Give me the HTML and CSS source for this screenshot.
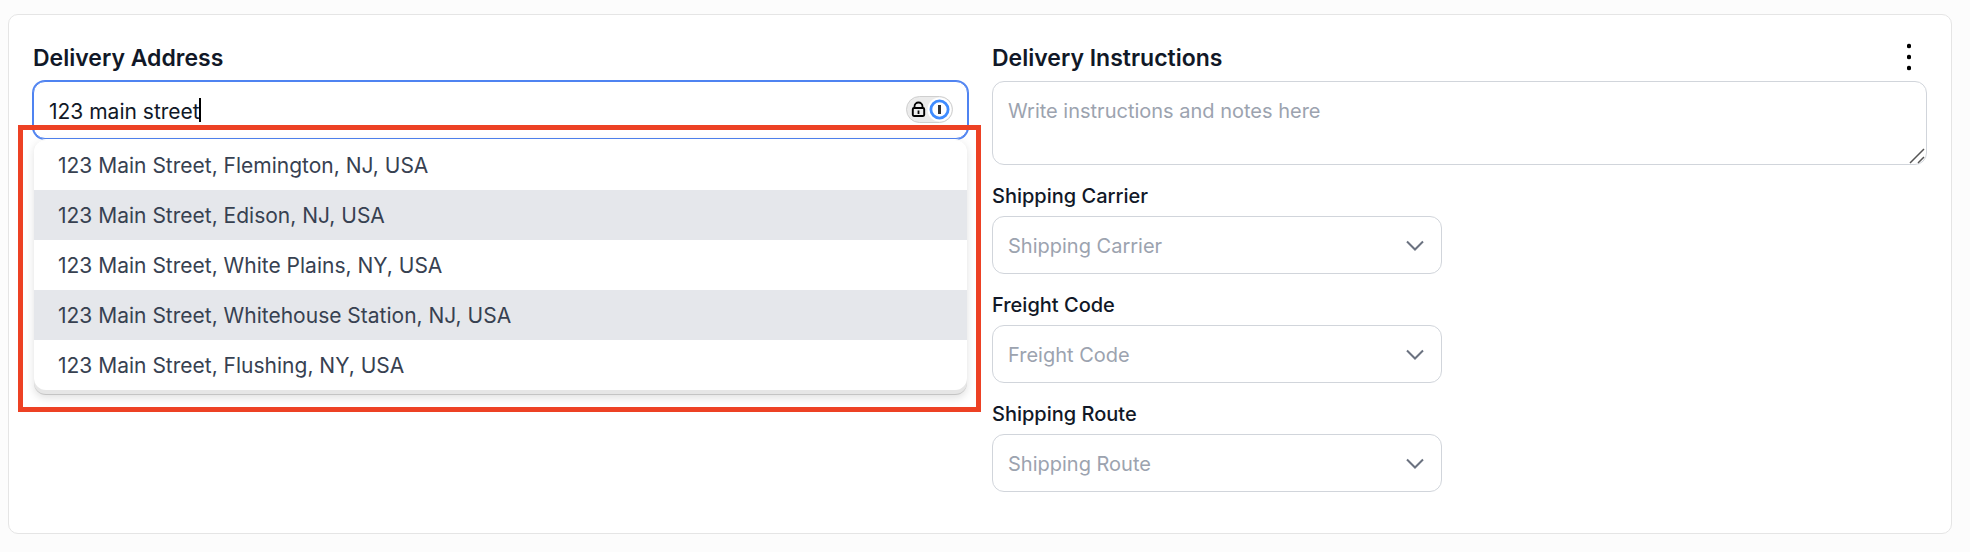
FILE: index.html
```html
<!DOCTYPE html>
<html lang="en">
<head>
  <meta charset="UTF-8" />
  <meta name="viewport" content="width=device-width, initial-scale=1.0"/>
  <title>Delivery</title>
  <link rel="stylesheet" href="styles.css">
</head>
<body>

  <div class="card">
    <!-- Address -->
    <div class="column">
      <div class="heading">
        <label class="title" for="address">Delivery Address</label>
      </div>
      <div class="address">
        <input type="text" id="address" class="address-input" value="123 main street" autocomplete="off" />
        <span class="caret"></span>
        <button class="vault" aria-label="Fill from password manager">
          <svg width="47" height="27" viewBox="0 0 47 27">
            <rect x="0.5" y="0.5" width="46" height="26" rx="13" fill="#ebebeb" stroke="#cfcfcf"/>
            <path d="M8.500 12V10.500a4 4 0 0 1 8 0V12" fill="none" stroke="#000" stroke-width="1.800"/>
            <rect x="6.800" y="12" width="11.400" height="8" rx="1.200" fill="none" stroke="#000" stroke-width="1.900"/>
            <path d="M12.500 14.500v3.500" stroke="#000" stroke-width="1.800"/>
            <circle cx="33.500" cy="13.500" r="12" fill="#fff"/>
            <circle cx="33.500" cy="13.500" r="8.600" fill="#fff" stroke="#3f8cff" stroke-width="2.800"/>
            <rect x="32" y="9" width="3" height="9" fill="#333"/>
          </svg>
        </button>
        <ul class="suggestions" role="listbox" aria-label="Suggested addresses">
          <li role="option">123 Main Street, Flemington, NJ, USA</li>
          <li role="option">123 Main Street, Edison, NJ, USA</li>
          <li role="option">123 Main Street, White Plains, NY, USA</li>
          <li role="option">123 Main Street, Whitehouse Station, NJ, USA</li>
          <li role="option">123 Main Street, Flushing, NY, USA</li>
        </ul>
        <div class="highlight"></div>
      </div>
    </div>

    <!-- Instructions and shipping -->
    <div class="column">
      <div class="heading">
        <label class="title" for="instructions">Delivery Instructions</label>
        <button class="menu-btn" aria-label="More options">
          <svg width="4" height="28" viewBox="0 0 4 28">
            <circle cx="2" cy="3" r="2.200"/>
            <circle cx="2" cy="14" r="2.200"/>
            <circle cx="2" cy="25" r="2.200"/>
          </svg>
        </button>
      </div>
      <div class="notes">
        <textarea id="instructions" placeholder="Write instructions and notes here"></textarea>
        <svg class="grip" width="16" height="16" viewBox="0 0 16 16">
          <path d="M1 15L15 1M9 15L15 9" stroke="#555" stroke-width="1.500"/>
        </svg>
      </div>

      <div class="field">
        <label for="carrier">Shipping Carrier</label>
        <div class="select">
          <select id="carrier"><option>Shipping Carrier</option></select>
          <svg class="chevron" width="18" height="12" viewBox="0 0 18 12"><path d="M1 1.500l8 8 8-8"/></svg>
        </div>
      </div>
      <div class="field">
        <label for="freight">Freight Code</label>
        <div class="select">
          <select id="freight"><option>Freight Code</option></select>
          <svg class="chevron" width="18" height="12" viewBox="0 0 18 12"><path d="M1 1.500l8 8 8-8"/></svg>
        </div>
      </div>
      <div class="field">
        <label for="route">Shipping Route</label>
        <div class="select">
          <select id="route"><option>Shipping Route</option></select>
          <svg class="chevron" width="18" height="12" viewBox="0 0 18 12"><path d="M1 1.500l8 8 8-8"/></svg>
        </div>
      </div>
    </div>
  </div>

</body>
</html>
```
FILE: styles.css
```css
* { box-sizing: border-box; margin: 0; padding: 0; font-family: Inter, "Liberation Sans", sans-serif; }
body {
  background-color: #fcfcfc;
  color: #111827;
  font-size: 20px;
}
.card {
  display: grid;
  grid-template-columns: 1fr 1fr;
  gap: 24px;
  margin: 14px 18px 18px 8px;
  padding: 24px 24px 41px;
  background: white;
  border: 1px solid #e5e5e5;
  border-radius: 10px;
}
.heading {
  display: flex;
  justify-content: space-between;
  align-items: center;
  height: 38px;
  margin-bottom: 4px;
}
.title {
  font-size: 23px;
  font-weight: 600;
}
.menu-btn {
  display: flex;
  padding: 0 16px 2px;
  background: none;
  border: none;
  cursor: pointer;
}
.address, .notes, .select { position: relative; }
.address-input, textarea, select {
  display: block;
  width: 100%;
  height: 58px;
  padding: 2px 15px 0;
  font-size: 20px;
  color: #111827;
  background: white;
  border: 1px solid #d1d5db;
  border-radius: 12px;
}
.address-input {
  font-size: 21px;
  border-color: #4f83f1;
  box-shadow: 0 0 0 1px #4f83f1;
  outline: none;
}
.caret {
  position: absolute;
  top: 17px;
  left: 166px;
  width: 2px;
  height: 24px;
  background: #000;
}
.vault {
  position: absolute;
  top: 15px;
  right: 15px;
  display: flex;
  background: none;
  border: none;
  cursor: pointer;
}
.suggestions {
  position: absolute;
  top: 58px;
  left: 1px;
  right: 1px;
  overflow: hidden;
  padding-bottom: 4px;
  list-style: none;
  font-size: 21px;
  color: #374151;
  background: #e6e6e6;
  border-top: 1px solid white;
  border-bottom: 1px solid #c4c4c4;
  border-radius: 12px;
  box-shadow: 0 3px 8px rgba(0,0,0,0.12);
}
.suggestions li {
  height: 50px;
  padding: 0 24px;
  line-height: 52px;
  background: white;
}
.suggestions li:nth-child(even) { background: #e5e7eb; }
.suggestions li:last-child { border-radius: 0 0 12px 12px; }
.highlight {
  position: absolute;
  top: 44px;
  left: -15px;
  right: -13px;
  height: 287px;
  border: 5px solid #ed4124;
  pointer-events: none;
}
textarea {
  height: 84px;
  padding: 16px 15px;
  line-height: 26px;
  resize: none;
}
textarea::placeholder { color: #9ca3af; opacity: 1; }
.grip {
  position: absolute;
  right: 2px;
  bottom: 1px;
}
.field {
  max-width: 450px;
  margin-top: 16px;
}
.field label {
  display: block;
  margin-bottom: 5px;
  line-height: 30px;
  font-weight: 500;
}
select {
  appearance: none;
  color: #9ca3af;
}
.chevron {
  position: absolute;
  top: 24px;
  right: 18px;
  fill: none;
  stroke: #6b7280;
  stroke-width: 2;
  pointer-events: none;
}
@media (max-width: 900px) {
  .card { grid-template-columns: 1fr; }
}
```
